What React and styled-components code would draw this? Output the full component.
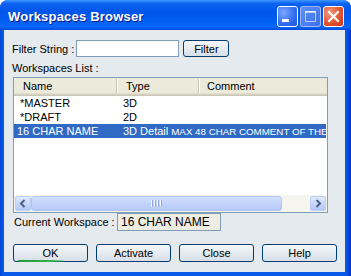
import React from 'react';
import styled, { createGlobalStyle } from 'styled-components';

const GlobalStyle = createGlobalStyle`
  html, body { margin: 0; padding: 0; }
  body {
    font-family: "Liberation Sans", Arial, sans-serif;
    font-size: 11px;
    color: #000;
    background: #fff;
  }
  * { box-sizing: border-box; }
`;

const Window = styled.div`
  width: 351px;
  height: 276px;
  display: flex;
  flex-direction: column;
  background: linear-gradient(90deg, #0045d8, #0a5ae8 3px, #0a5ae8 calc(100% - 5px), #0032c8);
  border-radius: 8px 8px 0 0;
  overflow: hidden;
`;

const TitleBar = styled.div`
  height: 30px;
  flex: none;
  display: flex;
  align-items: center;
  padding: 3px 7px 0 8px;
  background: linear-gradient(
    #3f96ff 0%,
    #0b63f2 12%,
    #0055ea 40%,
    #0260f4 75%,
    #0a67f8 90%,
    #0348d8 100%
  );
`;

const Title = styled.div`
  font-family: "Liberation Sans", Arial, sans-serif;
  font-weight: bold;
  font-size: 13px;
  letter-spacing: 0.2px;
  color: #fff;
  text-shadow: 1px 1px 0 #0a1a8c;
  flex: 1;
`;

const Caps = styled.div`
  display: flex;
  gap: 2px;
`;

const CapButton = styled.div`
  width: 21px;
  height: 21px;
  border-radius: 3px;
  border: 1px solid ${(p) => (p.$disabled ? 'rgba(255,255,255,0.45)' : '#fff')};
  display: flex;
  align-items: center;
  justify-content: center;
  background: ${(p) =>
    p.$kind === 'close'
      ? 'radial-gradient(circle at 30% 30%, #f49a7c, #e0502a 60%, #c8391a)'
      : p.$disabled
      ? 'linear-gradient(135deg, #5f8ff4, #3c71ea)'
      : 'radial-gradient(circle at 30% 30%, #7aa6ff, #2f6cf0 60%, #1c55dc)'};
`;

const Frame = styled.div`
  flex: 1;
  display: flex;
  padding: 0 6px 4px 4px;
`;

const Client = styled.div`
  flex: 1;
  display: flex;
  flex-direction: column;
  padding: 10px 0 0 8px;
  background: #e5eaef;
`;

const Row = styled.div`
  display: flex;
  align-items: center;
  height: ${(p) => p.$h || 17}px;
  margin-left: ${(p) => p.$ml || 0}px;
  gap: ${(p) => p.$gap || 0}px;
`;

const Label = styled.span`
  white-space: nowrap;
  width: ${(p) => (p.$w ? `${p.$w}px` : 'auto')};
  flex: none;
`;

const TextInput = styled.div`
  width: 103px;
  height: 17px;
  margin-left: 1px;
  border: 1px solid #7f9db9;
  background: #fff;
`;

const Button = styled.div`
  position: relative;
  width: ${(p) => p.$w}px;
  height: ${(p) => p.$h || 18}px;
  margin-left: ${(p) => p.$ml || 0}px;
  border: 1px solid #003c74;
  border-radius: 3px;
  background: linear-gradient(#f4f7fa, #e3e9ef 60%, #d6dee7);
  display: flex;
  align-items: center;
  justify-content: center;
  font-size: 11px;
  color: #000;
  &::after {
    content: '';
    display: ${(p) => (p.$default ? 'block' : 'none')};
    position: absolute;
    left: 4px;
    bottom: -1px;
    width: 46px;
    height: 2px;
    border-radius: 1px;
    background: linear-gradient(90deg, #1f9a3a, #32b24b 70%, rgba(60, 180, 80, 0.3));
  }
`;

const SectionLabel = styled.div`
  line-height: 13px;
  margin: 5px 0 2px;
`;

const ListBox = styled.div`
  width: 315px;
  height: 136px;
  margin-left: 1px;
  border: 1px solid #7f9db9;
  background: #fff;
  display: flex;
  flex-direction: column;
  overflow: hidden;
`;

const Header = styled.div`
  height: 18px;
  flex: none;
  display: flex;
  align-items: center;
  padding-bottom: 2px;
  background: #ebeadb;
  box-shadow: inset 0 -1px #cbc7b8, inset 0 -2px #d6d2c2, inset 0 -3px #e2decd;
  color: #000;
`;

const HeaderCell = styled.div`
  width: ${(p) => (p.$w ? `${p.$w}px` : 'auto')};
  flex: ${(p) => (p.$w ? 'none' : 1)};
  padding-left: ${(p) => p.$pl}px;
`;

const Divider = styled.div`
  width: 2px;
  height: 14px;
  flex: none;
  border-left: 1px solid #c7c5b2;
  border-right: 1px solid #fff;
`;

const ItemRow = styled.div`
  height: 14px;
  display: grid;
  grid-template-columns: 109px 1fr;
  align-items: center;
  margin-right: 1px;
  background: ${(p) => (p.$selected ? '#316ac5' : 'transparent')};
  color: ${(p) => (p.$selected ? '#fff' : '#000')};
  white-space: nowrap;
  overflow: hidden;
`;

const NameCell = styled.div`
  padding-left: ${(p) => (p.$selected ? 3 : 6)}px;
  overflow: hidden;
`;

const TypeCell = styled.div`
  overflow: hidden;
  white-space: nowrap;
`;

const Comment = styled.span`
  font-size: 9.75px;
  margin-left: 3px;
`;

const Spacer = styled.div`
  flex: 1;
`;

const Scrollbar = styled.div`
  height: 17px;
  flex: none;
  display: flex;
  padding: 1px;
  background: #f6f5f0;
`;

const ScrollBtn = styled.div`
  width: 16px;
  flex: none;
  border-radius: 2px;
  border: 1px solid #b9cdf6;
  background: linear-gradient(#dfe9fd, #c4d5fb 60%, #b4c8f6);
  display: flex;
  align-items: center;
  justify-content: center;
`;

const Thumb = styled.div`
  width: 251px;
  flex: none;
  border-radius: 3px;
  border: 1px solid #b0c4f2;
  background: linear-gradient(#d3e0fd, #c3d4fb 50%, #b6c9f6);
  display: flex;
  align-items: center;
  justify-content: center;
  gap: 1px;
`;

const Grip = styled.div`
  width: 1px;
  height: 7px;
  background: #eef3ff;
  box-shadow: 1px 0 #8ea8e4;
  margin-right: 1px;
`;

const Track = styled.div`
  flex: 1;
`;

const ValueBox = styled.div`
  width: 104px;
  height: 18px;
  border: 1px solid #7f9db9;
  background: #efede2;
  font-size: 12px;
  padding-left: 3px;
  display: flex;
  align-items: center;
`;

const ButtonRow = styled.div`
  display: flex;
  gap: 8px;
  margin: 13px 0 0 1px;
`;

const rows = [
  { name: '*MASTER', type: '3D' },
  { name: '*DRAFT', type: '2D' },
  { name: '16 CHAR NAME', type: '3D Detail', comment: 'MAX 48 CHAR COMMENT OF THE DRAFT', selected: true },
];

const Chevron = ({ dir }) => (
  <svg width="8" height="9" viewBox="0 0 8 9">
    <path
      d={dir === 'left' ? 'M5.5 1 L2 4.5 L5.5 8' : 'M2.5 1 L6 4.5 L2.5 8'}
      fill="none"
      stroke="#4d6185"
      strokeWidth="2"
    />
  </svg>
);

export default function App() {
  return (
    <>
      <GlobalStyle />
      <Window>
        <TitleBar>
          <Title>Workspaces Browser</Title>
          <Caps>
            <CapButton>
              <svg width="19" height="19" viewBox="0 0 19 19">
                <rect x="4" y="12" width="7" height="3" fill="#fff" />
              </svg>
            </CapButton>
            <CapButton $disabled>
              <svg width="19" height="19" viewBox="0 0 19 19">
                <rect x="4.5" y="4.5" width="10" height="10" fill="none" stroke="rgba(255,255,255,0.6)" />
                <rect x="4" y="4" width="11" height="2" fill="rgba(255,255,255,0.6)" />
              </svg>
            </CapButton>
            <CapButton $kind="close">
              <svg width="19" height="19" viewBox="0 0 19 19">
                <path d="M5 5 L14 14 M14 5 L5 14" stroke="#fff" strokeWidth="2" strokeLinecap="square" />
              </svg>
            </CapButton>
          </Caps>
        </TitleBar>
        <Frame>
          <Client>
            <Row $gap={1}>
              <Label>Filter String :</Label>
              <TextInput />
              <Button $w={46} $h={17} $ml={3}>Filter</Button>
            </Row>
            <SectionLabel>Workspaces List :</SectionLabel>
            <ListBox>
              <Header>
                <HeaderCell $w={102} $pl={9}>Name</HeaderCell>
                <Divider />
                <HeaderCell $w={80} $pl={8}>Type</HeaderCell>
                <Divider />
                <HeaderCell $pl={7}>Comment</HeaderCell>
              </Header>
              {rows.map((r) => (
                <ItemRow key={r.name} $selected={r.selected}>
                  <NameCell $selected={r.selected}>{r.name}</NameCell>
                  <TypeCell>
                    {r.type}
                    {r.comment && <Comment>{r.comment}</Comment>}
                  </TypeCell>
                </ItemRow>
              ))}
              <Spacer />
              <Scrollbar>
                <ScrollBtn>
                  <Chevron dir="left" />
                </ScrollBtn>
                <Thumb>
                  <Grip />
                  <Grip />
                  <Grip />
                  <Grip />
                </Thumb>
                <Track />
                <ScrollBtn>
                  <Chevron dir="right" />
                </ScrollBtn>
              </Scrollbar>
            </ListBox>
            <Row $h={18} $ml={2}>
              <Label $w={103}>Current Workspace :</Label>
              <ValueBox>16 CHAR NAME</ValueBox>
            </Row>
            <ButtonRow>
              <Button $w={75} $default>OK</Button>
              <Button $w={75}>Activate</Button>
              <Button $w={75}>Close</Button>
              <Button $w={75}>Help</Button>
            </ButtonRow>
          </Client>
        </Frame>
      </Window>
    </>
  );
}
